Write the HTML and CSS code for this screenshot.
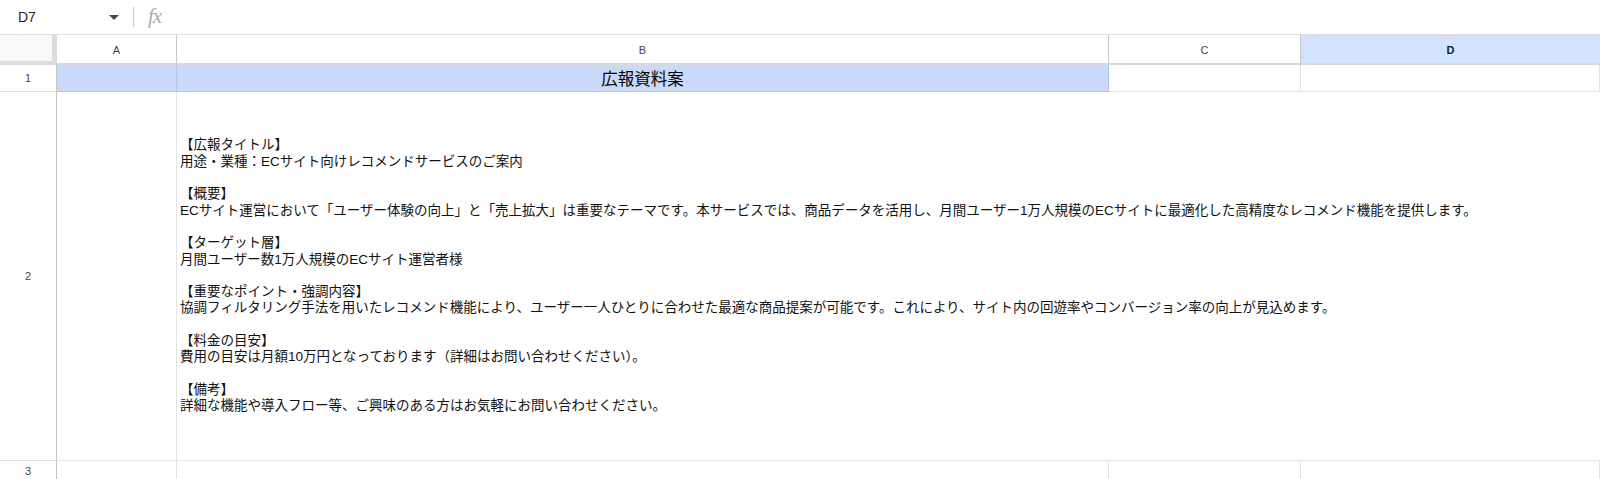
FILE: index.html
```html
<!DOCTYPE html>
<html lang="ja">
<head>
<meta charset="utf-8">
<title>広報資料案</title>
<link rel="stylesheet" href="styles.css">
</head>
<body>
<div class="namebar">
  <div class="namebox">
    <span class="cellref">D7</span>
    <svg class="caret" width="10" height="5" viewBox="0 0 10 5"><path d="M0 0h10L5 5z" fill="#444746"/></svg>
  </div>
  <div class="sep"></div>
  <span class="fx">fx</span>
</div>
<div class="grid">
  <div class="corner"></div>
  <div class="colhead">A</div>
  <div class="colhead">B</div>
  <div class="colhead">C</div>
  <div class="colhead sel">D</div>

  <div class="rowhead">1</div>
  <div class="cell blue"></div>
  <div class="cell blue title">広報資料案</div>
  <div class="cell"></div>
  <div class="cell"></div>

  <div class="rowhead">2</div>
  <div class="cell"></div>
  <div class="cell body span3">
    <div class="text">【広報タイトル】<br>用途・業種：ECサイト向けレコメンドサービスのご案内<br><br>【概要】<br>ECサイト運営において「ユーザー体験の向上」と「売上拡大」は重要なテーマです。本サービスでは、商品データを活用し、月間ユーザー1万人規模のECサイトに最適化した高精度なレコメンド機能を提供します。<br><br>【ターゲット層】<br>月間ユーザー数1万人規模のECサイト運営者様<br><br>【重要なポイント・強調内容】<br>協調フィルタリング手法を用いたレコメンド機能により、ユーザー一人ひとりに合わせた最適な商品提案が可能です。これにより、サイト内の回遊率やコンバージョン率の向上が見込めます。<br><br>【料金の目安】<br>費用の目安は月額10万円となっております（詳細はお問い合わせください）。<br><br>【備考】<br>詳細な機能や導入フロー等、ご興味のある方はお気軽にお問い合わせください。</div>
  </div>

  <div class="rowhead">3</div>
  <div class="cell"></div>
  <div class="cell"></div>
  <div class="cell"></div>
  <div class="cell"></div>
</div>
</body>
</html>
```

FILE: styles.css
```css
* { box-sizing: border-box; }
html, body { margin: 0; padding: 0; }
body {
  width: 1600px;
  height: 479px;
  overflow: hidden;
  background: #ffffff;
  font-family: "Liberation Sans", "Noto Sans CJK JP", sans-serif;
  color: #000;
}
.namebar {
  height: 35px;
  display: flex;
  align-items: center;
  border-bottom: 1px solid #e0e0e0;
}
.namebox {
  width: 133px;
  display: flex;
  align-items: center;
  padding-left: 18px;
  padding-right: 14px;
}
.cellref {
  font-size: 14px;
  color: #1f1f1f;
  flex: 1;
}
.caret { display: block; margin-top: 1px; }
.sep {
  width: 1px;
  height: 20px;
  background: #c4c7c5;
}
.fx {
  margin-left: 14px;
  font-family: "Liberation Serif", serif;
  font-style: italic;
  font-size: 21px;
  color: #a8abae;
  letter-spacing: -1px;
  line-height: 1;
  margin-top: -2px;
}
.grid {
  display: grid;
  grid-template-columns: 57px 120px 932px 192px 299px;
  grid-template-rows: 30px 27px 369px 21px;
}
.corner {
  background: #f8f9fa;
  border-right: 5px solid #dadce0;
  border-bottom: 4px solid #dadce0;
}
.colhead {
  display: flex;
  align-items: center;
  justify-content: center;
  font-size: 11px;
  color: #444746;
  background: #fff;
  border-right: 1px solid #c7c7c7;
  border-bottom: 2px solid #dadada;
  padding-top: 1px;
}
.colhead.sel {
  background: #d3e3fd;
  color: #041e49;
  font-weight: bold;
  border-right: none;
}
.rowhead {
  display: flex;
  align-items: center;
  justify-content: center;
  font-size: 11px;
  color: #444746;
  background: #fff;
  border-right: 1px solid #c4c7c5;
  border-bottom: 1px solid #e1e1e1;
}
.cell {
  border-right: 1px solid #e2e3e3;
  border-bottom: 1px solid #e2e3e3;
  min-width: 0;
}
.cell.blue {
  background: #c9daf8;
  border-right-color: #aec4ec;
  border-bottom-color: #b5c7e6;
}
.title {
  display: flex;
  align-items: center;
  justify-content: center;
  font-size: 16.5px;
  color: #000;
}
.span3 { grid-column: span 3; }
.body {
  display: flex;
  align-items: center;
  padding-left: 3px;
  border-right: none;
}
.text {
  font-size: 13.5px;
  line-height: 16.3px;
  color: #111;
  white-space: nowrap;
}
```
